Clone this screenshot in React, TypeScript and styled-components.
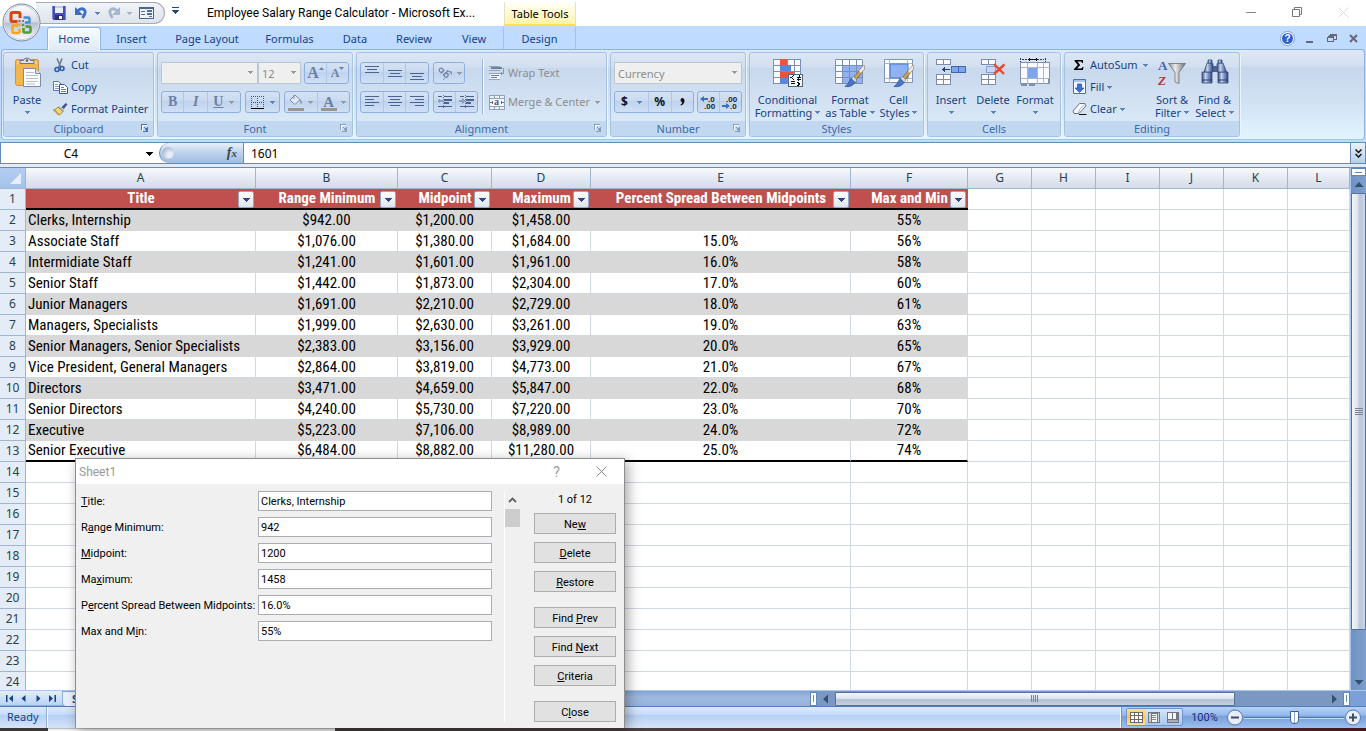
import React from "react";
import styled, { createGlobalStyle, css } from "styled-components";

const uiFont = `"Noto Sans", "Open Sans", sans-serif`;
const titleFont = `Roboto, "Noto Sans", sans-serif`;
const sheetFont = `"Roboto Condensed", Roboto, "Liberation Sans", sans-serif`;
const navy = "#15428b";

const GlobalStyle = createGlobalStyle`
  *, *::before, *::after { box-sizing: border-box; }
  body { margin: 0; background: #bfdbff; font-family: ${uiFont}; font-size: 11px; color: #000; overflow: hidden; }
  button, input, select { font: inherit; color: inherit; margin: 0; padding: 0; }
  button { background: none; border: 0; white-space: nowrap; }
  svg { display: block; flex: none; }
`;

/* ---------- window frame ---------- */

const Window = styled.div`
  position: relative;
  display: flex;
  flex-direction: column;
  height: 100vh;
  overflow: hidden;
  background: #fff;
`;

const TitleBar = styled.header`
  display: flex;
  flex: none;
  height: 26px;
  background: #fff;
  padding-left: 36px;
`;

const QuickAccess = styled.div`
  display: flex;
  align-items: center;
  width: 129px;
  height: 22px;
  margin-top: 2px;
  padding-left: 15px;
  border: 1px solid #a4a8b8;
  border-left: 0;
  border-radius: 0 11px 11px 0;
  background: linear-gradient(#f1f4f8, #e6ebf1 50%, #dee4ec);
`;

const QuickButton = styled.button<{ $w: number }>`
  display: flex;
  align-items: center;
  justify-content: center;
  width: ${(p) => p.$w}px;
  height: 20px;
`;

const WindowTitle = styled.h1`
  flex: none;
  width: 297px;
  margin: 0 0 0 22px;
  font: 12px/27px ${titleFont};
  white-space: nowrap;
`;

const ContextTitle = styled.div`
  flex: none;
  width: 72px;
  margin-top: 2px;
  border: solid #e5e0c8;
  border-width: 0 1px;
  border-bottom: 2px solid #ffe24a;
  background: linear-gradient(#fffef8, #fffad2 50%, #fff3a8);
  font-size: 11px;
  line-height: 23px;
  text-align: center;
  white-space: nowrap;
`;

const WindowControls = styled.div`
  display: flex;
  margin-left: auto;
`;

const WindowControl = styled.button`
  display: flex;
  align-items: center;
  justify-content: center;
  width: 46px;
  height: 25px;
`;

const OrbButton = styled.button`
  position: absolute;
  left: 2px;
  top: 3px;
  z-index: 3;
`;

/* ---------- tabs ---------- */

const TabRow = styled.nav`
  display: flex;
  flex: none;
  height: 23px;
  padding: 1px 3px 0 47px;
  background: #bfdbff;
`;

const Tab = styled.button<{ $w: number; $active?: boolean; $context?: boolean }>`
  flex: none;
  width: ${(p) => p.$w}px;
  height: 23px;
  color: ${navy};
  line-height: 22px;
  text-align: center;
  ${(p) =>
    p.$active &&
    css`
      position: relative;
      z-index: 1;
      border: 1px solid #8fb5e4;
      border-bottom: 0;
      border-radius: 3px 3px 0 0;
      background: linear-gradient(#f9fcff, #e9f1fb 60%, #dfe9f6);
      box-shadow: inset 1px 1px #fff, inset -1px 0 #fff;
    `}
  ${(p) =>
    p.$context &&
    css`
      border: solid #a9bfdb;
      border-width: 0 1px;
    `}
`;

const ChildControls = styled.div`
  display: flex;
  align-items: center;
  gap: 3px;
  margin-left: auto;
`;

const ChildControl = styled.button`
  display: flex;
  align-items: center;
  justify-content: center;
  width: 19px;
  height: 20px;
`;

/* ---------- ribbon ---------- */

const Ribbon = styled.div`
  display: flex;
  flex: none;
  gap: 3px;
  height: 91px;
  margin: 0 1px;
  padding: 2px 1px;
  border: 1px solid #8db2e3;
  border-bottom-color: #8fd3e0;
  border-radius: 4px;
  background: linear-gradient(#dfe8f5, #d2dff0 16px, #c7d7ec 17px, #d0e1f3 50px, #e2f5ff);
`;

const RibbonShell = styled.div`
  flex: none;
  background: #bfdbff;
  border-bottom: 1px solid #648cba;
  padding-bottom: 2px;
`;

const GroupBox = styled.section<{ $w: number }>`
  display: flex;
  flex: none;
  flex-direction: column;
  width: ${(p) => p.$w}px;
  height: 85px;
  border: 1px solid #a6c2e0;
  border-radius: 3px;
  background: linear-gradient(#dde7f4, #d1dff0 14px, #c8d8ed 15px, #d9e8f6 68px);
  box-shadow: 1px 1px #eaf5ff;
  overflow: hidden;
`;

const GroupBody = styled.div<{ $pad?: number }>`
  display: flex;
  height: 68px;
  padding: 1px 0 0 ${(p) => p.$pad ?? 0}px;
`;

const GroupLabel = styled.h2`
  position: relative;
  height: 15px;
  margin: 0;
  background: #c1d8f0;
  color: #3e6aaa;
  font-size: 11px;
  font-weight: 400;
  line-height: 15px;
  text-align: center;
`;

const Launcher = styled.button`
  position: absolute;
  right: 4px;
  top: 3px;
`;

const BigButton = styled.button<{ $w: number }>`
  display: flex;
  flex: none;
  flex-direction: column;
  align-items: center;
  width: ${(p) => p.$w}px;
  padding-top: 3px;
  color: ${navy};
  line-height: 13px;
  > svg { margin-bottom: 4px; }
`;

const BigLine = styled.span`
  display: flex;
  align-items: center;
  justify-content: center;
  gap: 3px;
  height: 13px;
`;

const SmallColumn = styled.div<{ $w?: number; $pad?: number }>`
  display: flex;
  flex: none;
  flex-direction: column;
  align-items: flex-start;
  width: ${(p) => (p.$w ? `${p.$w}px` : "auto")};
  padding-left: ${(p) => p.$pad ?? 0}px;
`;

const SmallButton = styled.button`
  display: flex;
  align-items: center;
  gap: 3px;
  height: 22px;
  color: ${navy};
  line-height: 22px;
  &:disabled { color: #8d8d8d; }
`;

const ArrowGap = styled.span`
  padding-left: 2px;
`;

const ToolRows = styled.div`
  display: flex;
  flex-direction: column;
  gap: 7px;
  padding-top: 8px;
`;

const ToolRow = styled.div<{ $gap?: number }>`
  display: flex;
  align-items: center;
  gap: ${(p) => p.$gap ?? 3}px;
  height: 22px;
`;

const ToolSet = styled.div<{ $w: number }>`
  display: flex;
  width: ${(p) => p.$w}px;
  height: 22px;
  border: 1px solid #8fb0dc;
  border-radius: 3px;
  background: linear-gradient(#d5e2f3, #c9daf0 45%, #bfd3ee 46%, #cfe0f5);
`;

const Tool = styled.button<{ $grow?: number; $gap?: number }>`
  display: flex;
  flex: ${(p) => p.$grow ?? 1} 1 0;
  align-items: center;
  justify-content: center;
  gap: ${(p) => p.$gap ?? 4}px;
  min-width: 0;
  font: 700 14px "Liberation Serif", serif;
  color: #6c7fa4;
  & + & { border-left: 1px solid #b0c8e8; }
`;

const Glyph = styled.span<{ $italic?: boolean; $underline?: boolean; $size?: number; $dark?: boolean; $sans?: boolean }>`
  font-family: ${(p) => (p.$sans ? uiFont : `"Liberation Serif", serif`)};
  font-size: ${(p) => p.$size ?? 14}px;
  font-style: ${(p) => (p.$italic ? "italic" : "normal")};
  text-decoration: ${(p) => (p.$underline ? "underline" : "none")};
  line-height: 16px;
  color: ${(p) => (p.$dark ? "#111" : "#6c7fa4")};
`;

const ColorTool = styled.span`
  display: flex;
  flex-direction: column;
  align-items: center;
  border-bottom: 3px solid #9a9590;
  width: 16px;
  height: 17px;
`;

const ComboWrap = styled.span<{ $w: number }>`
  position: relative;
  width: ${(p) => p.$w}px;
  height: 22px;
  & + & { margin-left: -3px; }
  > svg { position: absolute; right: 5px; top: 9px; }
`;

const Combo = styled.select`
  appearance: none;
  width: 100%;
  height: 22px;
  padding: 0 3px;
  border: 1px solid #bcc7d5;
  border-radius: 0;
  background: #efefef;
  color: #8d8d8d;
  opacity: 1;
`;

const Divider = styled.span`
  width: 2px;
  height: 55px;
  margin: 5px 5px 0 4px;
  border-left: 1px solid #9db8da;
  background: #f3f8fe;
`;

/* ---------- formula bar ---------- */

const FormulaBar = styled.div`
  display: flex;
  flex: none;
  height: 21px;
  border-bottom: 1px solid #648cba;
  background: #fff;
`;

const NameBox = styled.div`
  position: relative;
  width: 159px;
  border-left: 1px solid #648cba;
  > svg { position: absolute; right: 6px; top: 9px; }
`;

const NameInput = styled.input`
  width: 140px;
  height: 20px;
  border: 0;
  background: none;
  font-size: 12px;
  text-align: center;
`;

const FxArea = styled.div`
  display: flex;
  align-items: center;
  justify-content: space-between;
  width: 85px;
  padding: 0 6px 0 2px;
  border: 1px solid #648cba;
  border-width: 0 1px;
  border-radius: 10px 0 0 10px;
  background: linear-gradient(#e8f0fa, #bcd2ec 50%, #9dbce4);
`;

const FxKnob = styled.span`
  width: 12px;
  height: 12px;
  border-radius: 50%;
  background: radial-gradient(circle at 65% 65%, #e8eef6 20%, #a8b6cc 75%);
`;

const FxButton = styled.button`
  font: italic 700 14px/18px "Liberation Serif", serif;
  color: #3c4654;
  small { font-size: 11px; }
`;

const FormulaInput = styled.input`
  flex: 1;
  min-width: 0;
  border: 0;
  padding-left: 7px;
  font-size: 12px;
  outline: 0;
`;

const ExpandButton = styled.button`
  display: flex;
  align-items: center;
  justify-content: center;
  width: 16px;
  border: 1px solid #648cba;
  border-width: 0 1px;
  background: linear-gradient(#eaf2fc, #b5cdea);
`;

/* ---------- worksheet ---------- */

const GridArea = styled.div`
  display: flex;
  flex: 1;
  min-height: 0;
  border-top: 3px solid #dfeafa;
  background: #fff;
`;

const SheetView = styled.div`
  flex: 1;
  min-width: 0;
  overflow: hidden;
  border-top: 1px solid #648cba;
`;

const Sheet = styled.table`
  width: 100%;
  border-spacing: 0;
  table-layout: fixed;
  font: 15px/18px ${sheetFont};
  tr { height: 21px; }
  th, td { overflow: hidden; padding: 0; white-space: nowrap; }
`;

const ColumnHead = styled.th`
  height: 20px;
  border-right: 1px solid #9eb6ce;
  border-bottom: 1px solid #9eb6ce;
  background: linear-gradient(#f8fafc, #e4eaf3 50%, #d5dce8);
  color: #29414f;
  font: 12px/18px ${uiFont};
`;

const CornerHead = styled(ColumnHead)`
  background: linear-gradient(#b4cdf0, #a5c2ec);
  > svg { margin: 0 4px 0 auto; }
`;

const RowHead = styled.th`
  border-right: 1px solid #9eb6ce;
  border-bottom: 1px solid #9eb6ce;
  background: #e4ecf7;
  color: #29414f;
  font: 12px/18px ${uiFont};
`;

const Cell = styled.td<{ $band?: boolean; $left?: boolean; $last?: boolean }>`
  position: relative;
  border-right: 1px solid #d0d7e5;
  border-bottom: 1px solid #d0d7e5;
  text-align: ${(p) => (p.$left ? "left" : "center")};
  &&& { padding-left: ${(p) => (p.$left ? 2 : 0)}px; }
  ${(p) => p.$band && css`background: #d8d8d8; border-color: #d8d8d8;`}
  ${(p) => p.$last && css`border-bottom: 2px solid #000; line-height: 19px;`}
`;

const HeadCell = styled.td`
  position: relative;
  border-bottom: 2px solid #000;
  background: #c0504d;
  color: #fff;
  font-weight: 700;
  text-align: center;
  line-height: 19px;
`;

const FilterButton = styled.button`
  position: absolute;
  right: 2px;
  top: 2px;
  display: flex;
  align-items: center;
  justify-content: center;
  width: 16px;
  height: 17px;
  border: 1px solid #8fa9c9;
  border-radius: 2px;
  background: linear-gradient(#fdfdfe, #dfe3ea);
`;

const VScroll = styled.div`
  display: flex;
  flex: none;
  flex-direction: column;
  align-items: center;
  width: 16px;
  border-top: 1px solid #648cba;
  border-left: 1px solid #a9c8f2;
  background: linear-gradient(90deg, #7092c2, #7e9fcd);
`;

const SplitBox = styled.span<{ $tall?: boolean }>`
  display: flex;
  flex: none;
  align-items: center;
  justify-content: center;
  width: ${(p) => (p.$tall ? 7 : 15)}px;
  height: ${(p) => (p.$tall ? 14 : 8)}px;
  border: 1px solid #5f88ba;
  background: #fff;
  &::after {
    content: "";
    width: ${(p) => (p.$tall ? 1 : 7)}px;
    height: ${(p) => (p.$tall ? 7 : 1)}px;
    background: #5f88ba;
  }
`;

const ScrollButton = styled.button`
  display: flex;
  flex: none;
  align-items: center;
  justify-content: center;
  width: 18px;
  height: 17px;
`;

const VThumb = styled.div`
  display: flex;
  flex: 438;
  align-items: center;
  justify-content: center;
  width: 15px;
  border: 1px solid #56709c;
  border-radius: 1px;
  background: linear-gradient(90deg, #f2f5f9, #dfe5ee 40%, #b9c6da 60%, #cdd6e4);
`;

const VTrack = styled.div`
  flex: 43;
`;

const SheetBar = styled.div`
  display: flex;
  flex: none;
  height: 17px;
  border-top: 1px solid #a9c8f2;
  border-bottom: 1px solid #4f7ebf;
  background: #7a98c2;
`;

const SheetNav = styled.div`
  display: flex;
  align-items: center;
  justify-content: space-around;
  width: 63px;
  padding: 0 2px;
  border: solid #8fb0dc;
  border-width: 0 1px 1px 0;
  background: linear-gradient(#e3eefc, #b9d3f5);
`;

const NavButton = styled.button`
  display: flex;
  align-items: center;
  justify-content: center;
  width: 14px;
  height: 14px;
`;

const SheetTabs = styled.div`
  flex: 747;
  background: linear-gradient(#84a5d3, #9fb9de 40%, #96b1d9);
`;

const SheetTab = styled.button`
  height: 14px;
  padding: 0 9px;
  border-radius: 0 0 4px 4px;
  background: #e8f1fc;
  color: ${navy};
  font-weight: 700;
  line-height: 13px;
`;

const HScroll = styled.div`
  display: flex;
  flex: 540;
  align-items: center;
`;

const HThumb = styled.div`
  display: flex;
  flex: 398;
  align-items: center;
  justify-content: center;
  height: 14px;
  border: 1px solid #56709c;
  border-radius: 1px;
  background: linear-gradient(#f4f7fa, #dde4ed 45%, #b3c1d4 55%, #c6d1df);
`;

const HTrack = styled.div`
  flex: 90;
`;

const Corner = styled.span`
  width: 16px;
  height: 15px;
  background: #7ba0d8;
`;

/* ---------- status bar ---------- */

const StatusBar = styled.footer`
  display: flex;
  flex: none;
  height: 21px;
  background: linear-gradient(#dbe9fc, #c9defa 35%, #b4d0f6 38%, #d5e4f8);
`;

const StatusText = styled.div`
  width: 47px;
  padding-left: 7px;
  border-right: 1px solid #8fb0dc;
  box-shadow: 1px 0 #f4f9ff;
  color: ${navy};
  line-height: 20px;
`;

const ViewArea = styled.div`
  display: flex;
  align-items: center;
  width: 245px;
  margin-left: auto;
  padding: 0 4px 1px;
  border-left: 1px solid #6f95cb;
  box-shadow: -1px 0 #f4f9ff;
  background: linear-gradient(#b5d2f8, #94b9ea 40%, #759fd8 42%, #9cc0f0);
`;

const ViewSet = styled.div`
  display: flex;
  width: 57px;
  height: 18px;
  border: 1px solid #6f95cb;
  border-radius: 2px;
  background: linear-gradient(#d6e5f9, #a9c8f0);
`;

const ViewButton = styled.button<{ $active?: boolean }>`
  display: flex;
  flex: 1;
  align-items: center;
  justify-content: center;
  ${(p) => p.$active && css`background: linear-gradient(#fddb9c, #fbc25c 50%, #ffe69a);`}
`;

const ZoomLabel = styled.button`
  width: 43px;
  color: #1b2a7b;
  font-family: ${titleFont};
`;

const ZoomSlider = styled.input`
  appearance: none;
  flex: 1;
  min-width: 0;
  height: 17px;
  background: linear-gradient(transparent 8px, #4d78b8 8px, #4d78b8 9px, #c4dbf7 9px, #c4dbf7 10px, transparent 10px);
  &::-webkit-slider-thumb {
    appearance: none;
    width: 9px;
    height: 13px;
    border: 1px solid #3d5f96;
    border-radius: 1px 1px 5px 5px;
    background: linear-gradient(90deg, #fff 3px, #8aa5cf 3px, #8aa5cf 4px, #fff 4px);
  }
`;

const Taskbar = styled.div`
  display: flex;
  flex: none;
  height: 3px;
  background: linear-gradient(90deg, #3b3638, #4b4041 45%, #532b2b 65%, #5a3a36 80%, #43161c);
`;

const TaskbarPreview = styled.div`
  width: 21%;
  margin-left: 48px;
  border-top: 1px solid #bcbcbc;
  background: #f1f1f1;
`;

/* ---------- data form ---------- */

const Dialog = styled.form`
  position: absolute;
  left: 75px;
  top: 458px;
  z-index: 5;
  width: 550px;
  border: 1px solid #8e8e8e;
  border-bottom: 0;
  background: #f0f0f0;
  box-shadow: 3px 3px 12px rgba(0, 0, 0, 0.35);
  font: 11px/13px ${titleFont};
`;

const DialogHead = styled.div`
  display: flex;
  align-items: center;
  height: 25px;
  padding-left: 3px;
  background: #fff;
  color: #999;
  font: 12px/24px ${titleFont};
`;

const DialogTitle = styled.span`
  flex: 1;
`;

const DialogControl = styled.button`
  display: flex;
  align-items: center;
  justify-content: center;
  width: 45px;
  height: 24px;
  font-size: 14px;
`;

const DialogBody = styled.div`
  display: flex;
  padding: 7px 8px 6px 5px;
`;

const Fields = styled.div`
  display: flex;
  flex: none;
  flex-direction: column;
  gap: 6px;
  width: 411px;
`;

const Field = styled.div`
  display: flex;
  align-items: center;
  height: 20px;
  label { width: 177px; white-space: nowrap; }
`;

const FieldInput = styled.input`
  flex: 1;
  min-width: 0;
  height: 20px;
  padding: 0 2px;
  border: 1px solid #abadb3;
  background: #fff;
`;

const FormScroll = styled.div`
  display: flex;
  flex-direction: column;
  align-items: center;
  width: 16px;
  margin-left: 12px;
  border-left: 1px solid #fff;
`;

const FormThumb = styled.span`
  width: 15px;
  height: 18px;
  margin-top: 1px;
  background: #cdcdcd;
`;

const Actions = styled.div`
  display: flex;
  flex: none;
  flex-direction: column;
  gap: 8px;
  width: 82px;
  margin-left: auto;
`;

const Counter = styled.output`
  height: 14px;
  line-height: 17px;
  text-align: center;
`;

const Action = styled.button<{ $spaced?: boolean }>`
  height: 21px;
  padding-top: 1px;
  margin-top: ${(p) => (p.$spaced ? 7 : 0)}px;
  border: 1px solid #adadad;
  background: #e1e1e1;
`;

/* ---------- drawings ---------- */

const Arrow = ({ color = "#5a82bd" }: { color?: string }) => (
  <svg width="5" height="3" viewBox="0 0 5 3" shapeRendering="crispEdges">
    <path d="M0 0h5v1h-1v1h-1v1h-1v-1h-1v-1h-1z" fill={color} />
  </svg>
);

const WideArrow = ({ color = "#000" }: { color?: string }) => (
  <svg width="7" height="4" viewBox="0 0 7 4" shapeRendering="crispEdges">
    <path d="M0 0h7v1h-1v1h-1v1h-1v1h-1v-1h-1v-1h-1v-1h-1z" fill={color} />
  </svg>
);

const Tri = ({ dir, color = "#34506f" }: { dir: "up" | "down" | "left" | "right"; color?: string }) => {
  const d = { up: "M5 2l4.500 5h-9z", down: "M.5 3h9l-4.500 5z", left: "M7 .5v9l-5-4.500z", right: "M3 .5l5 4.500l-5 4.500z" }[dir];
  return <svg width="10" height="10" viewBox="0 0 10 10"><path d={d} fill={color} /></svg>;
};

const Orb = () => (
  <svg width="39" height="39" viewBox="0 0 39 39">
    <defs>
      <linearGradient id="orb" x1="0" y1="0" x2="0" y2="1">
        <stop offset="0" stopColor="#fdfdfe" /><stop offset=".48" stopColor="#d5dbe5" />
        <stop offset=".52" stopColor="#b4bfd0" /><stop offset="1" stopColor="#fbfcfe" />
      </linearGradient>
    </defs>
    <circle cx="19.500" cy="19.500" r="18.500" fill="#fff" stroke="#75839c" />
    <circle cx="19.500" cy="19.500" r="17" fill="url(#orb)" stroke="#c6cdd8" />
    <g fill="none" strokeLinejoin="round">
      <path d="M15.500 18.500h-5q-1.500 0-1.500-1.500v-6q0-1.500 1.500-1.500h6q1.500 0 1.500 1.500v4" stroke="#d9430f" strokeWidth="3" />
      <path d="M21.500 14.500h4.500q1.500 0 1.500 1.500v3.500h-4.500" stroke="#3f8fd4" strokeWidth="2.400" />
      <path d="M16.500 22.500h-4.500q-1.500 0-1.500 1.500v4.500q0 1.500 1.500 1.500h4q1.500 0 1.500-1.500v-2.500" stroke="#f6a81c" strokeWidth="2.600" />
      <path d="M21.500 25v3q0 1.500 1.500 1.500h4q1.500 0 1.500-1.500v-3q0-1.500-1.500-1.500h-3.500" stroke="#4f9f33" strokeWidth="2.600" />
    </g>
    <path d="M20 17h2v2h-2z" fill="#3f8fd4" /><path d="M16.500 17h2v2h-2z" fill="#d9430f" />
    <path d="M16.500 21h2v2h-2z" fill="#f6a81c" /><path d="M20 21h2v2h-2z" fill="#4f9f33" />
  </svg>
);

const SaveIcon = () => (
  <svg width="14" height="14" viewBox="0 0 14 14" shapeRendering="crispEdges">
    <path d="M0 0h14v14h-13l-1-1z" fill="#4650b4" /><path d="M3 0h8v7h-8z" fill="#e9effa" />
    <path d="M3 0h8v2h-8z" fill="#b9cff0" /><path d="M3 9h8v5h-8z" fill="#2b2f6e" /><path d="M7 10h3v3h-3z" fill="#fff" />
    <path d="M0 0h1v13h-1zM13 0h1v14h-1z" fill="#7a84dc" />
  </svg>
);

const UndoIcon = ({ color = "#3c6cc4", flip }: { color?: string; flip?: boolean }) => (
  <svg width="14" height="14" viewBox="0 0 14 14">
    <g transform={flip ? "matrix(-1 0 0 1 14 0)" : undefined}>
      <path d="M3.500 5q3.500-3.500 6.500-1.500q3 2.500-1.500 8.500" fill="none" stroke={color} strokeWidth="2.800" />
      <path d="M1 1v8h8z" fill={color} />
    </g>
  </svg>
);

const FormIcon = () => (
  <svg width="15" height="14" viewBox="0 0 15 14" shapeRendering="crispEdges">
    <path d="M0 1h15v12h-15z" fill="#49648f" /><path d="M1 3h13v9h-13z" fill="#eef3fa" />
    <path d="M2 5h4v1h-4zM2 8h4v1h-4zM8 4h5v2h-5zM8 7h5v2h-5zM10 10h3v1h-3z" fill="#5b6d8c" />
  </svg>
);

const CustomizeIcon = () => (
  <svg width="7" height="7" viewBox="0 0 7 7" shapeRendering="crispEdges">
    <path d="M0 0h7v1h-7zM0 3h7l-3.500 4z" fill="#25477f" />
  </svg>
);

const LauncherIcon = ({ off }: { off?: boolean }) => (
  <svg width="8" height="8" viewBox="0 0 8 8" shapeRendering="crispEdges">
    <path d="M0 6v-6h6v1h-5v5zM3 3h1v1h-1zM4 4h1v1h-1zM7 3v5h-5v-1h3v-1h-1v-1h1v-1h1v-1z" fill={off ? "#8b9cb5" : "#4f73a8"} />
    <path d="M1 1h5v1h-4v4h-1z" fill="#fff" />
  </svg>
);

const PasteIcon = () => (
  <svg width="28" height="32" viewBox="0 0 28 32">
    <rect x="2.500" y="2.500" width="23" height="26" rx="2" fill="#f2b64e" stroke="#cf9338" />
    <path d="M4 4h20v3h-20z" fill="#f8cf80" />
    <path d="M7 6.500v-3h3.500q.5-2.500 3.500-2.500t3.500 2.500h3.500v3z" fill="#dfe3e8" stroke="#6c737d" />
    <circle cx="14" cy="3.500" r="1.300" fill="#5a6068" />
    <path d="M10.500 11.500h12l5 5v13h-17z" fill="#fbfcfe" stroke="#7d8ca6" />
    <path d="M22.500 11.500v5h5" fill="#d7e0ee" stroke="#7d8ca6" />
    <path d="M13 15.500h8M13 18.500h12M13 21.500h12M13 24.500h12M13 27h9" stroke="#b6c0d0" />
  </svg>
);

const CutIcon = () => (
  <svg width="15" height="16" viewBox="0 0 15 16">
    <path d="M4 1.500l4 9M9 1.500l-3.500 9" stroke="#6f7d93" strokeWidth="1.600" />
    <circle cx="4" cy="12.500" r="2" fill="none" stroke="#2f5baf" strokeWidth="1.600" />
    <circle cx="9" cy="11.500" r="2" fill="none" stroke="#2f5baf" strokeWidth="1.600" />
  </svg>
);

const CopyIcon = () => (
  <svg width="15" height="14" viewBox="0 0 15 14">
    <path d="M.5 1.500h5l2.500 2.500v6.500h-7.500z" fill="#fff" stroke="#5777b0" />
    <path d="M2 4.500h3M2 6.500h4M2 8.500h4" stroke="#7f9ccc" />
    <path d="M6.500 4.500h5l3 3v6h-8z" fill="#fff" stroke="#34589c" />
    <path d="M8 7.500h3M8 9.500h5M8 11.500h5" stroke="#5b82c4" />
  </svg>
);

const PainterIcon = () => (
  <svg width="15" height="14" viewBox="0 0 16 14">
    <path d="M9 5l4.500-4.500l2 1.500l-4 5z" fill="#4a4f94" />
    <path d="M6.500 4.500l5 4l-1 1.500l-5.500-4.500z" fill="#b9bec8" stroke="#777" strokeWidth=".5" />
    <path d="M5.500 5l5 4.500q-1.500 3-4.500 4l-5.500-5.500q3-1 5-3z" fill="#f3d675" stroke="#8c7226" strokeWidth=".8" />
    <path d="M1.500 7.500l5 5.500" stroke="#a98a35" />
  </svg>
);

const GrowMark = ({ down }: { down?: boolean }) => (
  <svg width="5" height="12" viewBox="0 0 5 12">
    <path d={down ? "M0 0h5l-2.500 3z" : "M0 3l2.500-3l2.500 3z"} fill="#6c7fa4" />
  </svg>
);

const Lines = ({ rows }: { rows: [number, number, number][] }) => (
  <svg width="14" height="14" viewBox="0 0 14 14" shapeRendering="crispEdges">
    {rows.map(([x, y, len]) => <path key={`${x}-${y}`} d={`M${x} ${y}h${len}v1h-${len}z`} fill="#4c628f" />)}
  </svg>
);

const IndentIcon = ({ out }: { out?: boolean }) => (
  <svg width="16" height="14" viewBox="0 0 16 14" shapeRendering="crispEdges">
    <path d="M7 1h8v1h-8zM7 4h8v2h-8zM7 7h5v2h-5zM1 11h14v1h-14zM1 1h4v1h-4z" fill="#4c628f" />
    <path d="M6 0v14" stroke="#5f739c" strokeDasharray="1 1" />
    <path d={out ? "M0 6l3-3v2h3v2h-3v2z" : "M6 6l-3-3v2h-3v2h3v2z"} fill="#8f9db8" />
  </svg>
);

const OrientIcon = () => (
  <svg width="16" height="16" viewBox="0 0 16 16" fill="none" stroke="#7788a6" strokeWidth="1.300">
    <g transform="rotate(45 6 7)">
      <circle cx="3.500" cy="7" r="2" /><path d="M5.500 4.500v5" />
      <path d="M8.500 2v7.500" /><circle cx="10.500" cy="7" r="2" />
    </g>
    <path d="M6 15l8-8M11 6.500h3.500v3.500" strokeWidth="1" stroke="#8a97ae" />
  </svg>
);

const WrapIcon = () => (
  <svg width="16" height="16" viewBox="0 0 16 16" shapeRendering="crispEdges">
    <path d="M0 1h11M0 5h11M0 8h11M0 14h11" stroke="#98a5bb" strokeWidth="1" transform="translate(0 .5)" />
    <path d="M2 2h11v2h-11z" fill="#6f7f9d" /><path d="M1 9h10v5h-10z" fill="#f0f4fa" />
    <path d="M2 10h8v1h-8zM2 12h6v1h-6z" fill="#6f7f9d" />
    <path d="M15 3v6h-2v2l-2-3l2-2v2h1v-5z" fill="#8795ae" />
  </svg>
);

const MergeIcon = () => (
  <svg width="16" height="15" viewBox="0 0 16 15" shapeRendering="crispEdges">
    <path d="M0 0h16v15h-16z" fill="#94a1b8" /><path d="M1 1h4v2h-4zM6 1h4v2h-4zM11 1h4v2h-4zM1 12h4v2h-4zM6 12h4v2h-4zM11 12h4v2h-4z" fill="#eef2f8" />
    <path d="M1 4h14v7h-14z" fill="#f4f7fb" /><path d="M1 7h3v1h-3zM12 7h3v1h-3zM3 6h1v3h-1zM12 6h1v3h-1z" fill="#5d6e90" />
    <text x="5" y="10" fontFamily="Liberation Serif, serif" fontSize="10" fontWeight="700" fill="#4c5d80">a</text>
  </svg>
);

const BorderIcon = () => (
  <svg width="13" height="13" viewBox="0 0 13 13" shapeRendering="crispEdges">
    <path d="M0 .5h13M0 6.500h13M.5 0v12M6.500 0v12M12.500 0v12" stroke="#555" strokeDasharray="1 1" />
    <path d="M0 12h13v1h-13z" fill="#000" />
  </svg>
);

const BucketIcon = () => (
  <svg width="14" height="12" viewBox="0 0 14 12">
    <path d="M1 6l5-5l5 4.500l-5 5z" fill="#e4eaf4" stroke="#7b8aa6" /><path d="M10.500 5q3 1 2 5.500q-1.500-1-2-5.500z" fill="#8795ae" />
    <path d="M5 5v-4" stroke="#7b8aa6" />
  </svg>
);

const DecimalIcon = ({ less }: { less?: boolean }) => (
  <svg width="17" height="15" viewBox="0 0 17 15">
    <g fontFamily="Liberation Sans, sans-serif" fontSize="8" fontWeight="700" fill="#222">
      <text x={less ? 4 : 8} y="7">{less ? ".00" : ".0"}</text><text x={less ? 8 : 4} y="14">{less ? ".0" : ".00"}</text>
    </g>
    <path d={less ? "M0 10h4v-2l4 3l-4 3v-2h-4z" : "M8 3h-4v-2l-4 3l4 3v-2h4z"} fill="#3c6cc8" />
  </svg>
);

const gridPath = "M.5 .5h27v24h-27zM.5 6.500h27M.5 12.500h27M.5 18.500h27M7.500 .5v24M14.500 .5v24M21.500 .5v24";

const ConditionalIcon = () => (
  <svg width="30" height="32" viewBox="0 0 30 32" shapeRendering="crispEdges">
    <path d="M0 2h28v25h-28z" fill="#fbfcff" /><path d={gridPath} stroke="#7a8fb3" fill="none" transform="translate(0 2)" />
    <path d="M7 2h7v6h-7zM7 15h14v6h-14z" fill="#f0523c" /><path d="M7 8h11v6h-11zM7 21h7v6h-7z" fill="#5b86e0" />
    <path d="M15.500 17.500h14v12h-14z" fill="#f4f6fa" stroke="#53657f" />
    <g stroke="#111" fill="none"><path d="M21 18.500l-3 2l3 2M17.500 24.500h4M24 20.500h4M24 22.500h4M27 18l-2 6M24 25l3 2l-3 2M17.500 26.500h4" /></g>
  </svg>
);

const Brush = () => (
  <g>
    <path d="M29 8l-11 13l2.500 2.500l9-11.500z" fill="#c9a35c" stroke="#6d5a34" strokeWidth=".7" />
    <path d="M29 8l-5 6l2 2l3.500-4z" fill="#ede9e0" />
    <path d="M18.500 19.500l3.500 3.500l-2 2.500l-4-4z" fill="#d5d9df" stroke="#6c737d" strokeWidth=".6" />
    <path d="M16 21.500l4 4q-3 5-10 4q3-2 6-8z" fill="#4975c6" stroke="#284b92" strokeWidth=".7" />
  </g>
);

const TableStyleIcon = () => (
  <svg width="30" height="32" viewBox="0 0 30 32">
    <path d="M0 2h28v25h-28z" fill="#fbfcff" /><path d="M7 8h21v19h-21z" fill="#8fb2f4" />
    <path d={gridPath} stroke="#7a8fb3" fill="none" transform="translate(0 2)" /><Brush />
  </svg>
);

const CellStyleIcon = () => (
  <svg width="30" height="32" viewBox="0 0 30 32">
    <path d="M.5 2.500h28v23h-28z" fill="#fbfcff" stroke="#8093b4" />
    <path d="M.5 6.500h28M.5 21.500h28M5.500 2.500v23M23.500 2.500v23" stroke="#a9b6cc" />
    <path d="M6 7h18v14h-18z" fill="#8fb2f4" stroke="#4b76cf" /><Brush />
  </svg>
);

const InsertCellsIcon = () => (
  <svg width="32" height="32" viewBox="0 0 32 32" shapeRendering="crispEdges">
    <g fill="#fbfcff" stroke="#7d8ca8"><path d="M1.500 2.500h14v5h-14zM8.500 2.500v5M1.500 17.500h14v10h-14zM1.500 22.500h14M8.500 17.500v10" /></g>
    <path d="M16.500 9.500h14v6h-14zM23.500 9.500v6" fill="#7ea4ee" stroke="#3f66b4" />
    <path d="M7 12h8v1h-8zM8 11h2v3h-2zM9 10h1v5h-1z" fill="#2d4166" />
  </svg>
);

const DeleteCellsIcon = () => (
  <svg width="32" height="32" viewBox="0 0 32 32">
    <g fill="#fbfcff" stroke="#7d8ca8" shapeRendering="crispEdges"><path d="M4.500 2.500h14v5h-14zM11.500 2.500v5M4.500 17.500h14v10h-14zM4.500 22.500h14M11.500 17.500v10" /></g>
    <path d="M9.500 9.500h9v6h-9z" fill="#c6d8f6" stroke="#3f66b4" strokeDasharray="1 1" />
    <path d="M17 7l10 10M27.500 7.500l-10.500 9.500" stroke="#f0472c" strokeWidth="2.400" />
  </svg>
);

const FormatCellsIcon = () => (
  <svg width="32" height="32" viewBox="0 0 32 32" shapeRendering="crispEdges">
    <path d="M1.500 1v4M26.500 1v4M3 2.500h22" stroke="#2d3a55" strokeDasharray="2 1" /><path d="M9 2h10v1h-10zM10 1h1v3h-1zM17 1h1v3h-1z" fill="#111" />
    <path d="M1.500 5.500h29v21h-29z" fill="#fbfcff" stroke="#8292ae" />
    <path d="M1.500 10.500h29M1.500 21.500h29M8.500 5.500v21M18.500 5.500v21M24.500 5.500v21" stroke="#a9b6cc" />
    <path d="M9 11h9v10h-9z" fill="#7ea4ee" /><path d="M2 27h6v2h-6zM10 27h6v2h-6zM31 7v20h-2" fill="#8292ae" />
  </svg>
);

const SigmaIcon = () => (
  <svg width="15" height="14" viewBox="0 0 15 14"><path d="M2.500 2h8.500v3h-1l-.8-1.500h-3.800l2.800 3.500l-3.200 3.500h4.500l1-1.500h1l-.6 3h-8.900v-1l3.800-4l-3.300-4z" fill="#000" /></svg>
);

const FillIcon = () => (
  <svg width="15" height="16" viewBox="0 0 15 16">
    <path d="M1.500 .5h12v14h-12z" fill="#f4f8ff" stroke="#4a6fb0" /><path d="M2 1h11v2h-11z" fill="#a9c4ee" />
    <path d="M5.500 5h4v4h2.500l-4.500 4.500l-4.500-4.500h2.500z" fill="#3d72d8" stroke="#264f9f" strokeWidth=".7" />
  </svg>
);

const EraserIcon = () => (
  <svg width="15" height="14" viewBox="0 0 15 14">
    <path d="M1 9l6.500-7.500h5.500l1 2.500l-7 7.500h-5z" fill="#f7f9fc" stroke="#69758a" /><path d="M6.500 11l1-3.500l6-5.500" fill="none" stroke="#a7b1c2" />
    <path d="M7 12.500h7.500" stroke="#111" />
  </svg>
);

const SortIcon = () => (
  <svg width="30" height="32" viewBox="0 0 30 32">
    <defs><linearGradient id="funnel"><stop offset="0" stopColor="#8e8e8e" /><stop offset=".4" stopColor="#eaeaea" /><stop offset="1" stopColor="#6d6d6d" /></linearGradient></defs>
    <g fontFamily="Liberation Serif, serif" fontWeight="700"><text x="1" y="13" fontSize="13" fill="#3c62b8">A</text><text x="1" y="28" fontSize="13" fontStyle="italic" fill="#b03a36">Z</text></g>
    <path d="M11.500 6.500h17l-6.500 9v11l-4-1.500v-9.500z" fill="url(#funnel)" stroke="#6f6f6f" strokeWidth=".8" />
  </svg>
);

const BinocularsIcon = () => (
  <svg width="28" height="32" viewBox="0 0 28 32">
    <defs><linearGradient id="lens"><stop offset="0" stopColor="#31487c" /><stop offset=".35" stopColor="#c5d3ee" /><stop offset=".7" stopColor="#6c86bc" /><stop offset="1" stopColor="#2c4170" /></linearGradient></defs>
    {[0, 16].map((x) => (
      <g key={x} fill="url(#lens)" stroke="#3b5080" strokeWidth=".8">
        <path d={`M${x + 1} 15h10v11h-10z`} />
        <path d={x ? "M16 15v-8q0-1 1.500-1h4.500l3.500 9z" : "M3 15l3-9h5q1 0 1 1v8z"} />
        <path d={x ? "M17 6v-3h4v3z" : "M7 6v-3h4v3z"} />
      </g>
    ))}
    <path d="M12 9h4v6h-4z" fill="#4b628f" />
    <path d="M1 23h10M17 23h10" stroke="#2c4170" />
  </svg>
);

/* ---------- composed parts ---------- */

type GroupProps = { title: string; width: number; pad?: number; launcher?: "on" | "off"; children: React.ReactNode };
const Group = ({ title, width, pad, launcher, children }: GroupProps) => (
  <GroupBox $w={width} aria-label={title}>
    <GroupBody $pad={pad}>{children}</GroupBody>
    <GroupLabel>
      {title}
      {launcher && <Launcher aria-label={`${title} settings`}><LauncherIcon off={launcher === "off"} /></Launcher>}
    </GroupLabel>
  </GroupBox>
);

type BigProps = { icon: React.ReactNode; first: string; second?: string; width: number };
const Big = ({ icon, first, second, width }: BigProps) => (
  <BigButton $w={width}>
    {icon}
    <BigLine>{first}</BigLine>
    <BigLine>{second}<Arrow /></BigLine>
  </BigButton>
);

const tabs: [string, number][] = [
  ["Home", 54], ["Insert", 61], ["Page Layout", 90], ["Formulas", 75], ["Data", 56], ["Review", 62], ["View", 58], ["Design", 73],
];

const headers = ["Title", "Range Minimum", "Midpoint", "Maximum", "Percent Spread Between Midpoints", "Max and Min"];
const rows = [
  ["Clerks, Internship", "$942.00", "$1,200.00", "$1,458.00", "", "55%"],
  ["Associate Staff", "$1,076.00", "$1,380.00", "$1,684.00", "15.0%", "56%"],
  ["Intermidiate Staff", "$1,241.00", "$1,601.00", "$1,961.00", "16.0%", "58%"],
  ["Senior Staff", "$1,442.00", "$1,873.00", "$2,304.00", "17.0%", "60%"],
  ["Junior Managers", "$1,691.00", "$2,210.00", "$2,729.00", "18.0%", "61%"],
  ["Managers, Specialists", "$1,999.00", "$2,630.00", "$3,261.00", "19.0%", "63%"],
  ["Senior Managers, Senior Specialists", "$2,383.00", "$3,156.00", "$3,929.00", "20.0%", "65%"],
  ["Vice President, General Managers", "$2,864.00", "$3,819.00", "$4,773.00", "21.0%", "67%"],
  ["Directors", "$3,471.00", "$4,659.00", "$5,847.00", "22.0%", "68%"],
  ["Senior Directors", "$4,240.00", "$5,730.00", "$7,220.00", "23.0%", "70%"],
  ["Executive", "$5,223.00", "$7,106.00", "$8,989.00", "24.0%", "72%"],
  ["Senior Executive", "$6,484.00", "$8,882.00", "$11,280.00", "25.0%", "74%"],
];
const columns: [string, number?][] = [
  ["A", 230], ["B", 142], ["C", 94], ["D", 99], ["E", 260], ["F", 117], ["G", 64], ["H", 64], ["I", 64], ["J", 64], ["K", 64], ["L"],
];
const emptyRows = Array.from({ length: 11 }, (_, i) => i + 14);
const emptyCells = (from: number) => columns.slice(from).map(([c]) => <Cell key={c} />);

type Key = [string, string, string];
const fields: { label: Key; value: string }[] = [
  { label: ["", "T", "itle:"], value: "Clerks, Internship" },
  { label: ["R", "a", "nge Minimum:"], value: "942" },
  { label: ["", "M", "idpoint:"], value: "1200" },
  { label: ["Ma", "x", "imum:"], value: "1458" },
  { label: ["P", "e", "rcent Spread Between Midpoints:"], value: "16.0%" },
  { label: ["Max and M", "i", "n:"], value: "55%" },
];
const actions: { label: Key; spaced?: boolean }[] = [
  { label: ["Ne", "w", ""] },
  { label: ["", "D", "elete"] },
  { label: ["", "R", "estore"] },
  { label: ["Find ", "P", "rev"], spaced: true },
  { label: ["Find ", "N", "ext"] },
  { label: ["", "C", "riteria"] },
  { label: ["C", "l", "ose"], spaced: true },
];
const KeyText = ({ parts }: { parts: Key }) => <>{parts[0]}<u>{parts[1]}</u>{parts[2]}</>;

const gray = "#9a9a9a";

export default function App() {
  return (
    <>
      <GlobalStyle />
      <Window>
        <OrbButton aria-label="Office menu"><Orb /></OrbButton>
        <TitleBar>
          <QuickAccess>
            <QuickButton $w={16} aria-label="Save"><SaveIcon /></QuickButton>
            <QuickButton $w={28} aria-label="Undo"><UndoIcon /></QuickButton>
            <QuickButton $w={5} aria-label="Undo list"><Arrow /></QuickButton>
            <QuickButton $w={27} aria-label="Redo"><UndoIcon color="#a3b6d2" flip /></QuickButton>
            <QuickButton $w={5} aria-label="Redo list"><Arrow color="#a9b2be" /></QuickButton>
            <QuickButton $w={28} aria-label="Form"><FormIcon /></QuickButton>
          </QuickAccess>
          <QuickButton $w={20} aria-label="Customize Quick Access Toolbar"><CustomizeIcon /></QuickButton>
          <WindowTitle>Employee Salary Range Calculator - Microsoft Ex...</WindowTitle>
          <ContextTitle>Table Tools</ContextTitle>
          <WindowControls>
            <WindowControl aria-label="Minimize"><svg width="11" height="11"><path d="M0 5.500h10" stroke="#888" /></svg></WindowControl>
            <WindowControl aria-label="Restore"><svg width="11" height="11"><path d="M.5 2.500h7v7h-7zM2.500 2.500v-2h7v7h-2" fill="none" stroke="#777" /></svg></WindowControl>
            <WindowControl aria-label="Close"><svg width="11" height="11"><path d="M.5 .5l10 10M10.500 .5l-10 10" stroke="#ddd" /></svg></WindowControl>
          </WindowControls>
        </TitleBar>

        <TabRow>
          {tabs.map(([name, w]) => (
            <Tab key={name} $w={w} $active={name === "Home"} $context={name === "Design"}>{name}</Tab>
          ))}
          <ChildControls>
            <ChildControl aria-label="Help">
              <svg width="15" height="15" viewBox="0 0 15 15">
                <circle cx="7.500" cy="7.500" r="7" fill="#fff" stroke="#7f9fd0" /><circle cx="7.500" cy="7.500" r="5.500" fill="#2c5fd0" />
                <text x="7.500" y="11" textAnchor="middle" fontFamily="Liberation Sans, sans-serif" fontSize="10" fontWeight="700" fill="#fff">?</text>
              </svg>
            </ChildControl>
            <ChildControl aria-label="Minimize workbook"><svg width="8" height="10"><path d="M0 8h7v2h-7z" fill="#667" /></svg></ChildControl>
            <ChildControl aria-label="Restore workbook"><svg width="10" height="9" shapeRendering="crispEdges"><path d="M.5 3.500h6v4h-6zM2.500 3v-2h7v4h-3M.5 2.500h6M2.500 .5h7" fill="none" stroke="#667" /></svg></ChildControl>
            <ChildControl aria-label="Close workbook"><svg width="9" height="9"><path d="M1 1l7 7M8 1l-7 7" stroke="#667" strokeWidth="2" /></svg></ChildControl>
          </ChildControls>
        </TabRow>

        <RibbonShell>
          <Ribbon>
            <Group title="Clipboard" width={151} launcher="on">
              <Big icon={<PasteIcon />} first="Paste" width={46} />
              <SmallColumn $pad={3}>
                <SmallButton><CutIcon />Cut</SmallButton>
                <SmallButton><CopyIcon />Copy</SmallButton>
                <SmallButton><PainterIcon />Format Painter</SmallButton>
              </SmallColumn>
            </Group>

            <Group title="Font" width={196} pad={3} launcher="off">
              <ToolRows>
                <ToolRow>
                  <ComboWrap $w={97}><Combo disabled aria-label="Font name"><option></option></Combo><Arrow color={gray} /></ComboWrap>
                  <ComboWrap $w={43}><Combo disabled aria-label="Font size"><option>12</option></Combo><Arrow color={gray} /></ComboWrap>
                  <ToolSet $w={45}>
                    <Tool $gap={0} aria-label="Grow font"><Glyph $size={16}>A</Glyph><GrowMark /></Tool>
                    <Tool $gap={0} aria-label="Shrink font"><Glyph $size={12}>A</Glyph><GrowMark down /></Tool>
                  </ToolSet>
                </ToolRow>
                <ToolRow $gap={4}>
                  <ToolSet $w={80}>
                    <Tool $grow={22} aria-label="Bold"><Glyph>B</Glyph></Tool>
                    <Tool $grow={23} aria-label="Italic"><Glyph $italic>I</Glyph></Tool>
                    <Tool $grow={33} aria-label="Underline"><Glyph $underline>U</Glyph><ArrowGap><Arrow color={gray} /></ArrowGap></Tool>
                  </ToolSet>
                  <ToolSet $w={35}><Tool aria-label="Borders"><BorderIcon /><ArrowGap><Arrow /></ArrowGap></Tool></ToolSet>
                  <ToolSet $w={66}>
                    <Tool aria-label="Fill color"><ColorTool><BucketIcon /></ColorTool><Arrow color={gray} /></Tool>
                    <Tool aria-label="Font color"><ColorTool><Glyph $size={15}>A</Glyph></ColorTool><Arrow color={gray} /></Tool>
                  </ToolSet>
                </ToolRow>
              </ToolRows>
            </Group>

            <Group title="Alignment" width={251} pad={3} launcher="off">
              <ToolRows>
                <ToolRow $gap={4}>
                  <ToolSet $w={69}>
                    <Tool aria-label="Top align"><Lines rows={[[0, 0, 14], [2, 3, 10], [0, 6, 14]]} /></Tool>
                    <Tool aria-label="Middle align"><Lines rows={[[0, 4, 14], [2, 7, 10], [0, 10, 14]]} /></Tool>
                    <Tool aria-label="Bottom align"><Lines rows={[[0, 7, 14], [2, 10, 10], [0, 13, 14]]} /></Tool>
                  </ToolSet>
                  <ToolSet $w={32}><Tool aria-label="Orientation"><OrientIcon /><Arrow color={gray} /></Tool></ToolSet>
                </ToolRow>
                <ToolRow $gap={4}>
                  <ToolSet $w={69}>
                    <Tool aria-label="Align left"><Lines rows={[[0, 1, 14], [0, 4, 9], [0, 7, 14], [0, 10, 9]]} /></Tool>
                    <Tool aria-label="Center"><Lines rows={[[0, 1, 14], [2, 4, 10], [0, 7, 14], [2, 10, 10]]} /></Tool>
                    <Tool aria-label="Align right"><Lines rows={[[0, 1, 14], [5, 4, 9], [0, 7, 14], [5, 10, 9]]} /></Tool>
                  </ToolSet>
                  <ToolSet $w={45}>
                    <Tool aria-label="Decrease indent"><IndentIcon out /></Tool>
                    <Tool aria-label="Increase indent"><IndentIcon /></Tool>
                  </ToolSet>
                </ToolRow>
              </ToolRows>
              <Divider />
              <ToolRows>
                <SmallButton disabled><WrapIcon />Wrap Text</SmallButton>
                <SmallButton disabled><MergeIcon />Merge &amp; Center<ArrowGap><Arrow color={gray} /></ArrowGap></SmallButton>
              </ToolRows>
            </Group>

            <Group title="Number" width={136} pad={3} launcher="off">
              <ToolRows>
                <ToolRow>
                  <ComboWrap $w={128}><Combo disabled aria-label="Number format"><option>Currency</option></Combo><Arrow color={gray} /></ComboWrap>
                </ToolRow>
                <ToolRow>
                  <ToolSet $w={80}>
                    <Tool $grow={34} $gap={9} aria-label="Currency style"><Glyph $dark $sans $size={12}>$</Glyph><Arrow /></Tool>
                    <Tool $grow={23} aria-label="Percent style"><Glyph $dark $sans $size={12}>%</Glyph></Tool>
                    <Tool $grow={22} aria-label="Comma style"><svg width="5" height="8" viewBox="0 0 5 8"><path d="M2.500 0q2 0 2 2.500q0 3.500-3.500 5l-.5-1q2-1 1.500-2.500q-1.500-.2-1.500-2q0-2 2-2z" fill="#111" /></svg></Tool>
                  </ToolSet>
                  <ToolSet $w={45}>
                    <Tool aria-label="Increase decimal"><DecimalIcon /></Tool>
                    <Tool aria-label="Decrease decimal"><DecimalIcon less /></Tool>
                  </ToolSet>
                </ToolRow>
              </ToolRows>
            </Group>

            <Group title="Styles" width={175}>
              <Big icon={<ConditionalIcon />} first="Conditional" second="Formatting" width={75} />
              <Big icon={<TableStyleIcon />} first="Format" second="as Table" width={50} />
              <Big icon={<CellStyleIcon />} first="Cell" second="Styles" width={47} />
            </Group>

            <Group title="Cells" width={134} pad={2}>
              <Big icon={<InsertCellsIcon />} first="Insert" width={42} />
              <Big icon={<DeleteCellsIcon />} first="Delete" width={42} />
              <Big icon={<FormatCellsIcon />} first="Format" width={42} />
            </Group>

            <Group title="Editing" width={176} pad={7}>
              <SmallColumn $w={79}>
                <SmallButton><SigmaIcon />AutoSum<ArrowGap><Arrow /></ArrowGap></SmallButton>
                <SmallButton><FillIcon />Fill<Arrow /></SmallButton>
                <SmallButton><EraserIcon />Clear<Arrow /></SmallButton>
              </SmallColumn>
              <Big icon={<SortIcon />} first="Sort &amp;" second="Filter" width={42} />
              <Big icon={<BinocularsIcon />} first="Find &amp;" second="Select" width={43} />
            </Group>
          </Ribbon>
        </RibbonShell>

        <FormulaBar>
          <NameBox><NameInput aria-label="Name box" defaultValue="C4" /><WideArrow /></NameBox>
          <FxArea><FxKnob /><FxButton aria-label="Insert function">f<small>x</small></FxButton></FxArea>
          <FormulaInput aria-label="Formula" defaultValue="1601" />
          <ExpandButton aria-label="Expand formula bar">
            <svg width="7" height="9"><path d="M.5 .5l3 3l3-3M.5 5l3 3l3-3" fill="none" stroke="#111" strokeWidth="1.500" /></svg>
          </ExpandButton>
        </FormulaBar>

        <GridArea>
          <SheetView>
            <Sheet>
              <colgroup>
                <col width={26} />
                {columns.map(([c, w]) => <col key={c} width={w} />)}
              </colgroup>
              <thead>
                <tr>
                  <CornerHead aria-label="Select all"><svg width="11" height="11"><path d="M11 0v11h-11z" fill="#e6eefa" /></svg></CornerHead>
                  {columns.map(([c]) => <ColumnHead key={c} scope="col">{c}</ColumnHead>)}
                </tr>
              </thead>
              <tbody>
                <tr>
                  <RowHead scope="row">1</RowHead>
                  {headers.map((h) => (
                    <HeadCell key={h}>{h}<FilterButton aria-label={`Filter ${h}`}><WideArrow color="#34458c" /></FilterButton></HeadCell>
                  ))}
                  {emptyCells(6)}
                </tr>
                {rows.map((row, r) => (
                  <tr key={row[0]}>
                    <RowHead scope="row">{r + 2}</RowHead>
                    {row.map((v, c) => (
                      <Cell key={c} $band={r % 2 === 0} $left={c === 0} $last={r === rows.length - 1}>{v}</Cell>
                    ))}
                    {emptyCells(6)}
                  </tr>
                ))}
                {emptyRows.map((n) => (
                  <tr key={n}><RowHead scope="row">{n}</RowHead>{emptyCells(0)}</tr>
                ))}
              </tbody>
            </Sheet>
          </SheetView>
          <VScroll>
            <SplitBox />
            <ScrollButton aria-label="Scroll up"><Tri dir="up" /></ScrollButton>
            <VThumb><svg width="8" height="8" shapeRendering="crispEdges"><path d="M0 .5h8M0 2.500h8M0 4.500h8M0 6.500h8" stroke="#7b8495" /></svg></VThumb>
            <VTrack />
            <ScrollButton aria-label="Scroll down"><Tri dir="down" /></ScrollButton>
          </VScroll>
        </GridArea>

        <SheetBar>
          <SheetNav>
            <NavButton aria-label="First sheet"><svg width="7" height="7"><path d="M0 0h1.500v7h-1.500zM7 0v7l-4-3.500z" fill={navy} /></svg></NavButton>
            <NavButton aria-label="Previous sheet"><svg width="5" height="7"><path d="M4.500 0v7l-4-3.500z" fill={navy} /></svg></NavButton>
            <NavButton aria-label="Next sheet"><svg width="5" height="7"><path d="M.5 0v7l4-3.500z" fill={navy} /></svg></NavButton>
            <NavButton aria-label="Last sheet"><svg width="7" height="7"><path d="M5.500 0h1.500v7h-1.500zM0 0v7l4-3.500z" fill={navy} /></svg></NavButton>
          </SheetNav>
          <SheetTabs><SheetTab>Sheet1</SheetTab></SheetTabs>
          <HScroll>
            <SplitBox $tall />
            <ScrollButton aria-label="Scroll left"><Tri dir="left" /></ScrollButton>
            <HThumb><svg width="8" height="7" shapeRendering="crispEdges"><path d="M.5 0v7M2.500 0v7M4.500 0v7M6.500 0v7" stroke="#7b8495" /></svg></HThumb>
            <HTrack />
            <ScrollButton aria-label="Scroll right"><Tri dir="right" /></ScrollButton>
            <SplitBox $tall />
          </HScroll>
          <Corner />
        </SheetBar>

        <StatusBar>
          <StatusText>Ready</StatusText>
          <ViewArea>
            <ViewSet>
              <ViewButton $active aria-label="Normal view"><svg width="13" height="11" shapeRendering="crispEdges"><path d="M.5 .5h12v10h-12zM.5 3.500h12M.5 7.500h12M4.500 .5v10M8.500 .5v10" fill="#fff" stroke="#6b6b5e" /></svg></ViewButton>
              <ViewButton aria-label="Page layout view"><svg width="12" height="11" shapeRendering="crispEdges"><path d="M0 0h12v11h-12z" fill="#707784" /><path d="M1 1h10v9h-10z" fill="#c9cdd4" /><path d="M3 1h6v9h-6z" fill="#f4f4f4" stroke="#707784" /><path d="M4 3h4M4 5h4M4 7h4" stroke="#888" transform="translate(0 .5)" /></svg></ViewButton>
              <ViewButton aria-label="Page break view"><svg width="12" height="11" shapeRendering="crispEdges"><path d="M0 0h12v11h-12z" fill="#707784" /><path d="M1 1h4v6h-4zM6 1h3v6h-3z" fill="#f4f4f4" /><path d="M1 8h10v2h-10z" fill="#a9adb6" /></svg></ViewButton>
            </ViewSet>
            <ZoomLabel>100%</ZoomLabel>
            <button aria-label="Zoom out"><svg width="18" height="17"><circle cx="9" cy="8.500" r="7.500" fill="#e8eef7" stroke="#5877a8" /><path d="M5 7.500h8v2h-8z" fill="#3f4d66" /></svg></button>
            <ZoomSlider type="range" aria-label="Zoom" min={0} max={100} defaultValue={50} />
            <button aria-label="Zoom in"><svg width="18" height="17"><circle cx="9" cy="8.500" r="7.500" fill="#e8eef7" stroke="#5877a8" /><path d="M5 7.500h8v2h-8zM8 4.500h2v8h-2z" fill="#3f4d66" /></svg></button>
          </ViewArea>
        </StatusBar>
        <Taskbar><TaskbarPreview /></Taskbar>

        <Dialog aria-label="Sheet1" onSubmit={(e) => e.preventDefault()}>
          <DialogHead>
            <DialogTitle>Sheet1</DialogTitle>
            <DialogControl type="button" aria-label="Help">?</DialogControl>
            <DialogControl type="button" aria-label="Close form"><svg width="11" height="11"><path d="M.5 .5l10 10M10.500 .5l-10 10" stroke="#888" /></svg></DialogControl>
          </DialogHead>
          <DialogBody>
            <Fields>
              {fields.map(({ label, value }, i) => (
                <Field key={i}>
                  <label htmlFor={`field-${i}`}><KeyText parts={label} /></label>
                  <FieldInput id={`field-${i}`} defaultValue={value} />
                </Field>
              ))}
            </Fields>
            <FormScroll>
              <ScrollButton type="button" aria-label="Previous record"><svg width="9" height="6"><path d="M1 5l3.500-3.500l3.500 3.500" fill="none" stroke="#606060" strokeWidth="1.800" /></svg></ScrollButton>
              <FormThumb />
            </FormScroll>
            <Actions>
              <Counter>1 of 12</Counter>
              {actions.map(({ label, spaced }, i) => (
                <Action key={i} type="button" $spaced={spaced}><KeyText parts={label} /></Action>
              ))}
            </Actions>
          </DialogBody>
        </Dialog>
      </Window>
    </>
  );
}
